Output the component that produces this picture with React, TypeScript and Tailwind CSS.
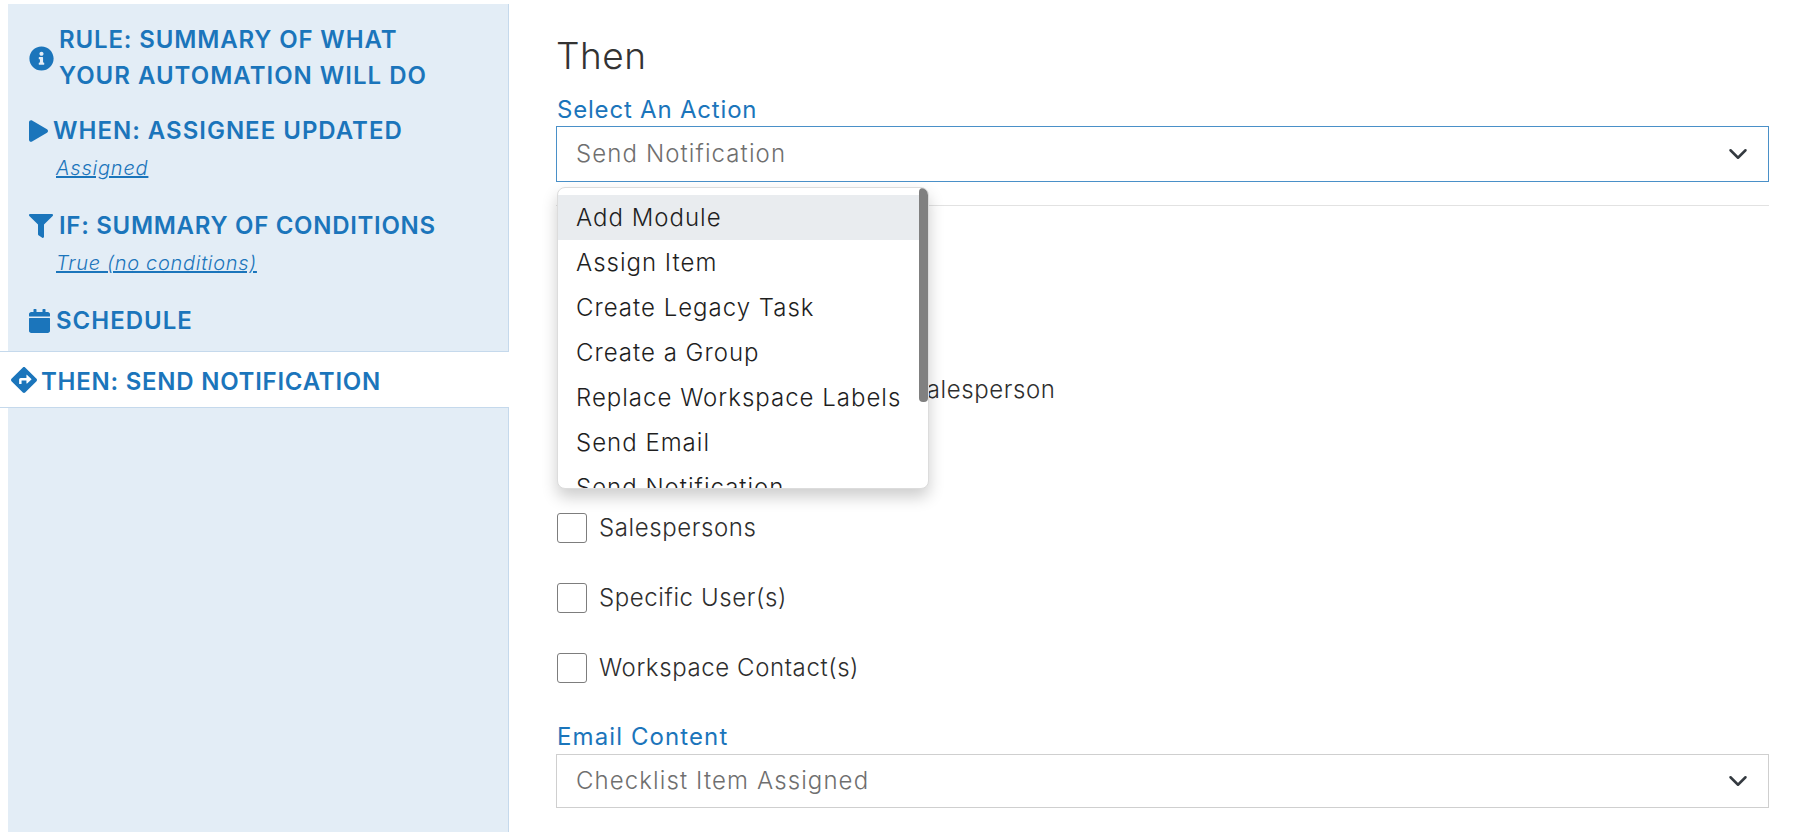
import { FaCalendar, FaDirections, FaFilter, FaInfoCircle, FaPlay } from "react-icons/fa"

function Chevron() {
  return (
    <svg viewBox="0 0 16 16" className="h-5 w-5 shrink-0" fill="none" stroke="#343a40" strokeWidth="2" strokeLinecap="round" strokeLinejoin="round">
      <path d="M2 5l6 6 6-6" />
    </svg>
  )
}

function Select({ value, focused }: { value: string; focused?: boolean }) {
  return (
    <div className={`flex items-center justify-between border bg-white pl-[19px] pr-[20px] text-[24px] font-light tracking-[1.1px] text-[#6f6f6f] ${focused ? "h-[56px] border-[#4a90c8]" : "h-[54px] border-[#cfcfcf]"}`}>
      <span>{value}</span>
      <Chevron />
    </div>
  )
}

function Check({ label }: { label: string }) {
  return (
    <label className="flex h-[30px] items-center gap-3 whitespace-nowrap text-[24px] font-light tracking-[0.6px] text-[#2e2e2e]">
      <span className="h-[30px] w-[30px] shrink-0 rounded-[3px] border-[1.5px] border-[#7d7d7d] bg-white" />
      {label}
    </label>
  )
}

const actions = ["Add Module", "Assign Item", "Create Legacy Task", "Create a Group", "Replace Workspace Labels", "Send Email", "Send Notification"]

export default function App() {
  return (
    <div className="flex h-[832px] overflow-hidden bg-white font-['Inter',sans-serif] text-[#1b75bb]">
      <aside className="flex w-[509px] shrink-0 flex-col pt-1 text-[24px] font-semibold leading-9 tracking-[1px]">
        <div className="ml-2 h-[347px] border-r border-[#c5d9ec] bg-[#e3edf6] pl-[21px] pt-[18px]">
          <div className="flex items-center">
            <FaInfoCircle className="h-[25px] w-[25px] shrink-0" />
            <div className="ml-[5px]">
              <span className="tracking-[0.85px]">RULE: SUMMARY OF WHAT</span>
              <br />
              YOUR AUTOMATION WILL DO
            </div>
          </div>
          <div className="mt-[19px] flex items-center">
            <FaPlay className="h-[22px] w-[19px] shrink-0" />
            <div className="ml-[5px]">WHEN: ASSIGNEE UPDATED</div>
          </div>
          <div className="ml-[27px] mt-[5px] text-[20px] font-light italic leading-7 tracking-[0.8px] underline">Assigned</div>
          <div className="mt-[26px] flex items-center">
            <FaFilter className="h-[24px] w-[24px] shrink-0" />
            <div className="ml-[6px] tracking-[0.7px]">IF: SUMMARY OF CONDITIONS</div>
          </div>
          <div className="ml-[27px] mt-[5px] text-[20px] font-light italic leading-7 tracking-[0.7px] underline">True (no conditions)</div>
          <div className="mt-[26px] flex items-center">
            <FaCalendar className="h-[24px] w-[21px] shrink-0" />
            <div className="ml-[6px]">SCHEDULE</div>
          </div>
        </div>
        <div className="flex h-[57px] items-center border-y border-[#c5d9ec] bg-white pl-[11px]">
          <FaDirections className="h-[26px] w-[26px] shrink-0" />
          <div className="ml-[4px] pt-[5px] tracking-[0.75px]">THEN: SEND NOTIFICATION</div>
        </div>
        <div className="ml-2 flex-1 border-r border-[#c5d9ec] bg-[#e3edf6]" />
      </aside>

      <main className="flex-1 pl-[47px] pr-[26px] pt-[33px]">
        <h1 className="text-[37px] font-light leading-[46px] tracking-[0.5px] text-[#333333]">Then</h1>
        <div className="mt-[15px] h-[32px] pl-px text-[24px] leading-8 tracking-[0.8px]">Select An Action</div>
        <div className="relative">
          <Select value="Send Notification" focused />
          <div className="absolute left-px top-[61px] z-10 flex h-[302px] w-[372px] overflow-hidden rounded-lg border border-[#dcdcdc] bg-white shadow-[0_8px_16px_rgba(0,0,0,0.2)]">
            <ul className="w-[361px] shrink-0 pt-[7px] text-[24px] font-light tracking-[1px] text-[#1f1f1f]">
              {actions.map((a, i) => (
                <li key={a} className={`flex h-[45px] items-center whitespace-nowrap pl-[18px] pt-px ${i === 0 ? "bg-[#e9ecef]" : ""}`}>
                  {a}
                </li>
              ))}
            </ul>
            <div className="w-[9px] shrink-0">
              <div className="h-[214px] rounded-[4px] bg-[#808080]" />
            </div>
          </div>
        </div>
        <div className="mt-[23px] border-t border-[#e2e2e2]" />
        <div className="mt-[169px] flex flex-col gap-[40px] pl-px">
          <div className="mb-[68px]">
            <Check label="Assigned Item Workspace Salesperson" />
          </div>
          <Check label="Salespersons" />
          <Check label="Specific User(s)" />
          <Check label="Workspace Contact(s)" />
        </div>
        <div className="mt-[38px] h-[33px] pl-px text-[24px] leading-8 tracking-[1.1px]">Email Content</div>
        <Select value="Checklist Item Assigned" />
      </main>
    </div>
  )
}
